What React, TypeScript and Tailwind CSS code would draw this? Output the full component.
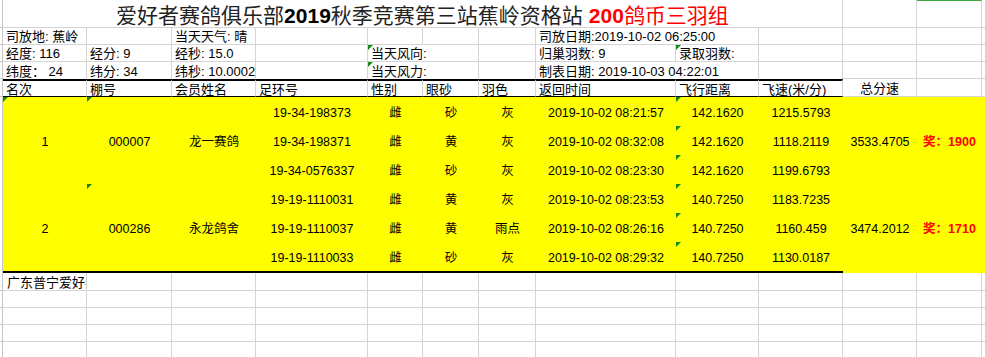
const G = 'border-r border-b border-r-[#d4d4d4] border-b-[#d4d4d4]';
const NOB = 'border-r border-r-[#d4d4d4]';
const HEAD = 'border-t-2 border-b border-r border-t-black border-b-black border-r-[#d4d4d4]';
const LS = 'border-r border-b border-r-[#c6c6c6] border-b-[#c6c6c6]';
const LS_Y = 'border-r border-r-[#c6c6c6]';
const RS = 'border-b border-b-[#d4d4d4]';
const Y = 'bg-[#ffff00]';

type Bird = { ring: string; sex: string; eye: string; color: string; back: string; dist: string; speed: string };
type Group = { rank: string; loft: string; name: string; total: string; prize: string; birds: Bird[] };

const groups: Group[] = [
  {
    rank: '1',
    loft: '000007',
    name: '龙一赛鸽',
    total: '3533.4705',
    prize: '1900',
    birds: [
      { ring: '19-34-198373', sex: '雌', eye: '砂', color: '灰', back: '2019-10-02 08:21:57', dist: '142.1620', speed: '1215.5793' },
      { ring: '19-34-198371', sex: '雌', eye: '黄', color: '灰', back: '2019-10-02 08:32:08', dist: '142.1620', speed: '1118.2119' },
      { ring: '19-34-0576337', sex: '雌', eye: '砂', color: '灰', back: '2019-10-02 08:23:30', dist: '142.1620', speed: '1199.6793' },
    ],
  },
  {
    rank: '2',
    loft: '000286',
    name: '永龙鸽舍',
    total: '3474.2012',
    prize: '1710',
    birds: [
      { ring: '19-19-1110031', sex: '雌', eye: '黄', color: '灰', back: '2019-10-02 08:23:53', dist: '140.7250', speed: '1183.7235' },
      { ring: '19-19-1110037', sex: '雌', eye: '黄', color: '雨点', back: '2019-10-02 08:26:16', dist: '140.7250', speed: '1160.459' },
      { ring: '19-19-1110033', sex: '雌', eye: '砂', color: '灰', back: '2019-10-02 08:29:32', dist: '140.7250', speed: '1130.0187' },
    ],
  },
];

function Tri() {
  return <span className="absolute left-0 top-0 h-0 w-0 border-t-[5px] border-r-[5px] border-t-[#138a13] border-r-transparent" />;
}

// info cell in the sheet header block
function Info({ cls, text, span2, tri }: { cls: string; text?: string; span2?: boolean; tri?: boolean }) {
  return (
    <div className={`${cls} ${span2 ? 'col-span-2' : ''} relative flex items-center whitespace-nowrap pl-[3px] pt-[1px] text-[13px] leading-none`}>
      {tri && <Tri />}
      {text}
    </div>
  );
}

function D({ text, last, tri, red }: { text?: string; last?: boolean; tri?: boolean; red?: boolean }) {
  return (
    <div
      className={`${Y} ${last ? 'border-b-2 border-b-black' : ''} relative flex items-center justify-center whitespace-nowrap pt-[3px] text-[12.5px] leading-none ${red ? 'font-bold text-[#ff0000]' : ''}`}
    >
      {tri && <Tri />}
      {text}
    </div>
  );
}

export default function App() {
  const heads = ['名次', '棚号', '会员姓名', '足环号', '性别', '眼砂', '羽色', '返回时间', '飞行距离', '飞速(米/分)'];

  return (
    <div className="h-[357px] w-[985px] overflow-hidden bg-white font-['Liberation_Sans','Noto_Sans_CJK_SC',sans-serif] text-black">
      <div className="grid grid-cols-[3px_84px_85px_84px_112px_55px_56px_57px_140px_83px_84px_74px_65px_3px] grid-rows-[28px_17px_17px_17px_18px_29px_29px_29px_29px_29px_31px_18px_17px_17px_17px_17px]">
        {/* title */}
        <div className={LS} />
        <div className={`${G} col-span-10 flex items-center justify-center whitespace-nowrap pt-[3px] text-[21px] leading-none`}>
          <span className="text-[#222]">爱好者赛鸽俱乐部</span>
          <span className="font-semibold">2019</span>
          <span className="text-[#222]">秋季竞赛第三站蕉岭资格站</span>
          <span className="ml-[6px] text-[#ff0000]">
            <span className="font-semibold">200</span>鸽币三羽组
          </span>
        </div>
        <div className={G} />
        <div className={`${G} border-t border-t-[#3daa3d]`} />
        <div className={RS} />

        {/* row 2 */}
        <div className={LS} />
        <Info cls={G} text="司放地: 蕉岭" />
        <Info cls={G} />
        <Info cls={G} text="当天天气: 晴" />
        <Info cls={G} />
        <Info cls={G} />
        <Info cls={G} />
        <Info cls={G} />
        <Info cls={G} span2 text="司放日期:2019-10-02 06:25:00" />
        <Info cls={G} />
        <Info cls={G} />
        <Info cls={G} />
        <div className={RS} />

        {/* row 3 */}
        <div className={LS} />
        <Info cls={G} text="经度: 116" />
        <Info cls={G} text="经分: 9" />
        <Info cls={G} text="经秒: 15.0" />
        <Info cls={G} />
        <Info cls={G} span2 tri text="当天风向:" />
        <Info cls={G} />
        <Info cls={G} text="归巢羽数: 9" />
        <Info cls={G} tri text="录取羽数:" />
        <Info cls={G} />
        <Info cls={G} />
        <Info cls={G} />
        <div className={RS} />

        {/* row 4 */}
        <div className={LS} />
        <Info cls={NOB} text="纬度： 24" />
        <Info cls={NOB} text="纬分: 34" />
        <Info cls={NOB} text="纬秒: 10.0002" />
        <Info cls={NOB} />
        <Info cls={NOB} span2 tri text="当天风力:" />
        <Info cls={NOB} />
        <Info cls={NOB} span2 text="制表日期: 2019-10-03 04:22:01" />
        <Info cls={NOB} />
        <Info cls={G} />
        <Info cls={G} />
        <div className={RS} />

        {/* column headers */}
        <div className={LS} />
        {heads.map((h) => (
          <div key={h} className={`${HEAD} flex items-end overflow-hidden whitespace-nowrap pl-[3px] text-[13px] leading-none`}>
            {h}
          </div>
        ))}
        <div className={`${G} flex items-end justify-center pb-[1px] text-[13px] leading-none`}>总分速</div>
        <div className={G} />
        <div className={RS} />

        {/* data */}
        {groups.map((g, gi) =>
          g.birds.map((b, bi) => {
            const last = gi === groups.length - 1 && bi === g.birds.length - 1;
            const mid = bi === 1;
            return [
              <div key={`${gi}-${bi}-l`} className={LS_Y} />,
              <D key={`${gi}-${bi}-1`} last={last} tri={bi === 0 && gi === 0} text={mid ? g.rank : ''} />,
              <D key={`${gi}-${bi}-2`} last={last} tri={bi === 0} text={mid ? g.loft : ''} />,
              <D key={`${gi}-${bi}-3`} last={last} text={mid ? g.name : ''} />,
              <D key={`${gi}-${bi}-4`} last={last} text={b.ring} />,
              <D key={`${gi}-${bi}-5`} last={last} text={b.sex} />,
              <D key={`${gi}-${bi}-6`} last={last} text={b.eye} />,
              <D key={`${gi}-${bi}-7`} last={last} text={b.color} />,
              <D key={`${gi}-${bi}-8`} last={last} text={b.back} />,
              <D key={`${gi}-${bi}-9`} last={last} tri text={b.dist} />,
              <D key={`${gi}-${bi}-10`} last={last} text={b.speed} />,
              <D key={`${gi}-${bi}-11`} text={mid ? g.total : ''} />,
              <D key={`${gi}-${bi}-12`} red text={mid ? `奖：${g.prize}` : ''} />,
              <div key={`${gi}-${bi}-r`} className={Y} />,
            ];
          }),
        )}

        {/* empty rows below */}
        {[0, 1, 2, 3, 4].map((r) => [
          <div key={`e${r}-l`} className={LS} />,
          ...Array.from({ length: 12 }, (_, c) => (
            <div
              key={`e${r}-${c}`}
              className={`${G} flex items-end overflow-hidden whitespace-nowrap pb-[1px] pl-[4px] text-[13px] leading-none`}
            >
              {r === 0 && c === 0 ? '广东普宁爱好者赛鸽俱乐部' : ''}
            </div>
          )),
          <div key={`e${r}-r`} className={RS} />,
        ])}
      </div>
    </div>
  );
}
